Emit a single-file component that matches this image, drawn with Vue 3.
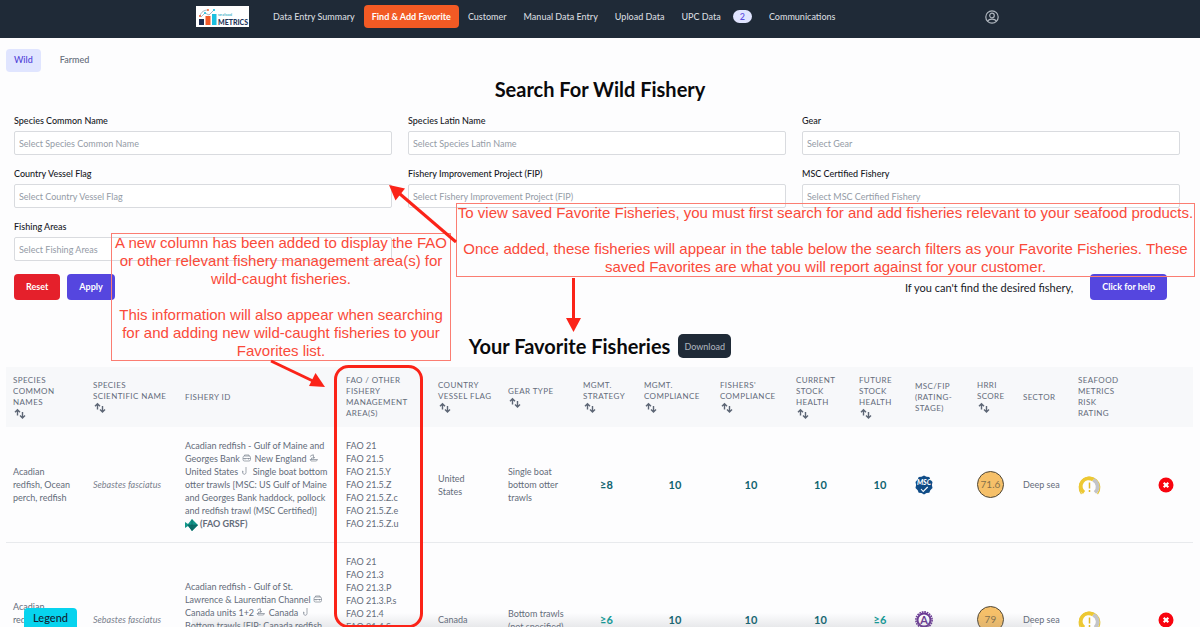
<script setup>
const nav = [
  { label: 'Data Entry Summary' },
  { label: 'Find & Add Favorite', active: true },
  { label: 'Customer' },
  { label: 'Manual Data Entry' },
  { label: 'Upload Data' },
  { label: 'UPC Data', badge: 2 },
  { label: 'Communications' },
]
const filters = [
  { id: 'common', label: 'Species Common Name' },
  { id: 'latin', label: 'Species Latin Name' },
  { id: 'gear', label: 'Gear' },
  { id: 'flag', label: 'Country Vessel Flag' },
  { id: 'fip', label: 'Fishery Improvement Project (FIP)' },
  { id: 'msc', label: 'MSC Certified Fishery' },
  { id: 'areas', label: 'Fishing Areas' },
]
const columns = [
  { lines: ['Species', 'Common', 'Names'], sort: true, w: 80 },
  { lines: ['Species', 'Scientific Name'], sort: true, w: 92 },
  { lines: ['Fishery ID'], w: 161 },
  { lines: ['FAO / Other', 'Fishery', 'Management', 'Area(s)'], w: 92 },
  { lines: ['Country', 'Vessel Flag'], sort: true, w: 70 },
  { lines: ['Gear Type'], sort: true, w: 75 },
  { lines: ['Mgmt.', 'Strategy'], sort: true, w: 61 },
  { lines: ['Mgmt.', 'Compliance'], sort: true, w: 76 },
  { lines: ["Fishers'", 'Compliance'], sort: true, w: 76 },
  { lines: ['Current', 'Stock', 'Health'], sort: true, w: 63 },
  { lines: ['Future', 'Stock', 'Health'], sort: true, w: 56 },
  { lines: ['MSC/FIP', '(Rating-', 'Stage)'], w: 62 },
  { lines: ['HRRI', 'Score'], sort: true, w: 46 },
  { lines: ['Sector'], w: 55 },
  { lines: ['Seafood', 'Metrics', 'Risk', 'Rating'], w: 80 },
  { lines: [], w: 42 },
]
const total = columns.reduce((sum, c) => sum + c.w, 0)
const rows = [
  {
    names: 'Acadian redfish, Ocean perch, redfish',
    latin: 'Sebastes fasciatus',
    stock: 'Acadian redfish - Gulf of Maine and Georges Bank',
    area: 'New England',
    flagState: 'United States',
    method: 'Single boat bottom otter trawls [MSC: US Gulf of Maine and Georges Bank haddock, pollock and redfish trawl (MSC Certified)]',
    grsf: true,
    fao: ['21', '21.5', '21.5.Y', '21.5.Z', '21.5.Z.c', '21.5.Z.e', '21.5.Z.u'],
    country: 'United States',
    gear: 'Single boat bottom otter trawls',
    scores: ['≥8', '10', '10', '10', '10'],
    cert: 'msc',
    hrri: '71.6',
  },
  {
    names: 'Acadian redfish, Ocean perch, redfish',
    latin: 'Sebastes fasciatus',
    stock: 'Acadian redfish - Gulf of St. Lawrence & Laurentian Channel',
    area: 'Canada units 1+2',
    flagState: 'Canada',
    method: 'Bottom trawls [FIP: Canada redfish trawl]',
    grsf: true,
    fao: ['21', '21.3', '21.3.P', '21.3.P.s', '21.4', '21.4.S.s', '21.4.T', '21.4.V', '21.4.V.n', '21.4.V.s'],
    country: 'Canada',
    gear: 'Bottom trawls (not specified)',
    scores: ['≥6', '10', '10', '10', '≥6'],
    cert: 'fip',
    hrri: '79',
  },
]
</script>

<template>
  <div class="page">
    <header class="topbar">
      <svg class="logo" viewBox="0 0 53 21" role="img" aria-label="Seafood Metrics">
        <rect width="53" height="21" fill="#fff" />
        <rect x="3" y="13" width="5" height="6" fill="#1d2b4f" />
        <rect x="9.5" y="10" width="5" height="9" fill="#f15a29" />
        <rect x="16" y="8" width="4.5" height="11" fill="#1cc0e0" />
        <path d="M4 10c1-4 4-6 8-6M5 11l4-4 4 2 5-5" fill="none" stroke="#8fa3b5" stroke-width=".8" />
        <circle cx="4" cy="10" r="1" fill="#f15a29" />
        <circle cx="9" cy="7" r="1" fill="#1cc0e0" />
        <circle cx="18" cy="4" r="1.1" fill="#1cc0e0" />
        <circle cx="12" cy="4" r=".9" fill="#f15a29" />
        <text x="22" y="10" class="logo-small">seafood</text>
        <text x="22" y="19" class="logo-word">METRICS</text>
      </svg>
      <nav class="nav" aria-label="Main">
        <a v-for="n in nav" :key="n.label" href="#" :class="{ active: n.active }">
          {{ n.label }}<span v-if="n.badge" class="badge">{{ n.badge }}</span>
        </a>
      </nav>
      <button class="account" aria-label="Account">
        <svg viewBox="0 0 16 16" fill="none" stroke="#aeb5bd" stroke-width="1.2">
          <circle cx="8" cy="8" r="6.2" />
          <circle cx="8" cy="6.5" r="2.3" />
          <path d="M3.500 12.300c1-1.700 2.600-2.200 4.500-2.200s3.500.5 4.500 2.200" />
        </svg>
      </button>
    </header>

    <nav class="tabs" aria-label="Fishery type">
      <a href="#" class="current">Wild</a>
      <a href="#">Farmed</a>
    </nav>

    <main>
      <h1>Search For Wild Fishery</h1>
      <form class="search" @submit.prevent>
        <div class="filters">
          <div v-for="f in filters" :key="f.id" class="field">
            <label :for="f.id">{{ f.label }}</label>
            <input :id="f.id" type="text" :placeholder="'Select ' + f.label" />
          </div>
        </div>
        <div class="actions">
          <button type="reset" class="btn red">Reset</button>
          <button type="submit" class="btn">Apply</button>
          <span class="hint">If you can't find the desired fishery,</span>
          <button type="button" class="btn">Click for help</button>
        </div>
      </form>

      <div class="favorites">
        <h2>Your Favorite Fisheries</h2>
        <button class="download">Download</button>
      </div>

      <table>
        <colgroup>
          <col v-for="(c, i) in columns" :key="i" :style="{ width: (c.w / total) * 100 + '%' }" />
        </colgroup>
        <thead>
          <tr>
            <th v-for="(c, i) in columns" :key="i" scope="col">
              <span v-for="l in c.lines" :key="l" class="line">{{ l }}</span>
              <button v-if="c.sort" class="sort" :aria-label="'Sort by ' + c.lines.join(' ')">
                <svg viewBox="0 0 14 12" fill="none" stroke="#5d6675" stroke-width="1.4">
                  <path d="M4.500 7.500V2M2 4.200 4.500 1.800 7 4.200M9.500 4V9.800M7 7.500 9.500 10 12 7.500" />
                </svg>
              </button>
            </th>
          </tr>
        </thead>
        <tbody>
          <tr v-for="(r, i) in rows" :key="i">
            <td class="snug">{{ r.names }}</td>
            <td><i>{{ r.latin }}</i></td>
            <td>
              {{ r.stock }}
              <svg class="glyph" viewBox="0 0 10 8" fill="none" stroke="#7b8491" stroke-width=".7">
                <rect x="1" y="2" width="7.5" height="5" rx="1.5" /><path d="M2.500 2V1H7v1M1 4.500h7.500M3 4v1.500M6.500 4v1.500" />
              </svg>
              {{ r.area }}
              <svg class="glyph" viewBox="0 0 10 8" fill="none" stroke="#7b8491" stroke-width=".7">
                <path d="M1 5.500h7.500L7.500 7H2zM2.500 5.500V4H5l-1-3M1 2.500l2-1.500h2M4 4l2-.5" />
              </svg>
              {{ r.flagState }}
              <svg class="glyph" viewBox="0 0 10 8" fill="none" stroke="#7b8491" stroke-width=".7">
                <path d="M6 0v5.500C6 8 2.500 8 2.500 5V4l1.200 1" />
              </svg>
              {{ r.method }}
              <template v-if="r.grsf">
                <br /><svg class="fish" viewBox="0 0 13 12">
                  <path d="M0 3l3 2 4-5 6 6-6 6-4-5-3 2z" fill="#12968a" />
                  <path d="M3 6h9.500L7 11.500zM7 .5v11" fill="#0c6f6a" stroke="#0b5f5e" stroke-width=".6" />
                </svg>
                <b>(FAO GRSF)</b>
              </template>
            </td>
            <td><span v-for="a in r.fao" :key="a" class="line">FAO {{ a }}</span></td>
            <td class="snug">{{ r.country }}</td>
            <td>{{ r.gear }}</td>
            <td v-for="(s, k) in r.scores" :key="k" class="score" :class="{ mid: s === '≥6' }">{{ s }}</td>
            <td>
              <svg v-if="r.cert === 'msc'" class="cert" viewBox="0 0 18 20" role="img" aria-label="MSC certified">
                <path d="M9 .5l2.500 1.200 2.800.3 1 2.500L17.500 7l-.6 3 .6 3-2.200 2.200-1 2.500-2.800.3L9 19.500 6.500 18l-2.800-.3-1-2.500L.5 13l.6-3-.6-3 2.200-2.500 1-2.500 2.800-.3z" fill="#104c87" />
                <text x="9" y="10" text-anchor="middle" class="msc">MSC</text>
                <path d="M6 14l2.200 2.500 4.500-4.500" fill="none" stroke="#fff" stroke-width="1.1" />
              </svg>
              <svg v-else class="cert" viewBox="0 0 18 20" role="img" aria-label="FIP rating A">
                <circle cx="9" cy="10" r="8.1" fill="none" stroke="#6b3a94" stroke-width="1.6" stroke-dasharray="1.7 .845" />
                <circle cx="9" cy="10" r="6.5" fill="#fff" stroke="#6b3a94" stroke-width="2" />
                <text x="9" y="14" text-anchor="middle" class="grade">A</text>
              </svg>
            </td>
            <td><span class="hrri">{{ r.hrri }}</span></td>
            <td>Deep sea</td>
            <td>
              <svg class="gauge" viewBox="0 0 23 20" role="img" aria-label="Medium risk">
                <path d="M3.500 19A10.300 10.300 0 1 1 19.500 19" fill="none" stroke="#e6c63c" stroke-width="1.2" />
                <path d="M15.200 4.900A7.600 7.600 0 0 1 17 17.500" fill="none" stroke="#c3c4c8" stroke-width="3.6" />
                <path d="M6 17.500A7.600 7.600 0 0 1 15.200 4.900" fill="none" stroke="#edc832" stroke-width="3.6" />
                <path d="M11.500 7.500v6M11.500 15v2" stroke="#e2b927" stroke-width="1.5" />
              </svg>
            </td>
            <td>
              <button class="remove" aria-label="Remove favorite">
                <svg viewBox="0 0 16 16">
                  <circle cx="8" cy="8" r="7.5" fill="#f8040f" />
                  <path d="M5.700 5.700l4.600 4.600M10.300 5.700l-4.600 4.600" stroke="#fff" stroke-width="2.2" />
                </svg>
              </button>
            </td>
          </tr>
        </tbody>
      </table>
    </main>

    <div class="shade"></div>
    <button class="legend">Legend</button>

    <aside class="note column-note">
      <p>A new column has been added to display the FAO or other relevant fishery management area(s) for wild-caught fisheries.</p>
      <p>This information will also appear when searching for and adding new wild-caught fisheries to your Favorites list.</p>
    </aside>
    <aside class="note saved-note">
      <p>To view saved Favorite Fisheries, you must first search for and add fisheries relevant to your seafood products.</p>
      <p>Once added, these fisheries will appear in the table below the search filters as your Favorite Fisheries. These saved Favorites are what you will report against for your customer.</p>
    </aside>
    <svg class="arrows" viewBox="0 0 1200 627" aria-hidden="true">
      <g stroke="#fb2318" stroke-width="3">
        <path d="M456 242L400 194" /><path d="M573.500 278v42" /><path d="M271 361l44 21" />
      </g>
      <g fill="#fb2318">
        <path d="M389 185l16 3.500-9.500 12z" /><path d="M566 318h15l-7.500 14z" /><path d="M325 387l-16-1 6.500-13z" />
      </g>
      <rect x="335.5" y="366.5" width="86" height="260" rx="13" fill="none" stroke="#fb2318" stroke-width="3" />
    </svg>
  </div>
</template>

<style>
body { background: #fdfdfe; }
</style>

<style scoped>
.page { position: relative; height: 100vh; overflow: hidden; font-family: Lato, "Liberation Sans", sans-serif; font-size: 9px; line-height: 13px; color: #646c7a; }
* { box-sizing: border-box; }
button { font: inherit; border: 0; padding: 0; cursor: pointer; background: none; }
a { color: inherit; text-decoration: none; }
svg { display: block; }

.topbar { display: flex; align-items: center; height: 38px; padding: 0 200px 5px 196px; background: #1f2a37; }
.logo { width: 53px; height: 21px; }
.logo-small { font: 700 4px Lato, sans-serif; fill: #4fb8cc; }
.logo-word { font: 900 7px Lato, sans-serif; fill: #24365a; }
.nav { display: flex; align-items: center; gap: 1px; margin-left: 16px; font-weight: 500; color: #d5d9df; }
.nav a { display: flex; align-items: center; height: 23px; padding: 0 8px; border-radius: 4px; white-space: nowrap; }
.nav .active { background: #f25a24; color: #fff; font-weight: 700; }
.badge { margin-left: 12px; padding: 0 7px; border-radius: 7px; background: #e0e4ff; color: #5a4be0; }
.account { margin-left: auto; }
.account svg { width: 16px; height: 16px; }

.tabs { display: flex; gap: 11px; padding: 11px 6px 0; font-weight: 500; }
.tabs a { height: 23px; padding: 4px 8px; border-radius: 4px; }
.tabs .current { background: #e0e5ff; color: #4f3fd8; }

h1, h2 { margin: 0; font-size: 20px; line-height: 24px; font-weight: 700; color: #0a0a0c; text-align: center; }
h1 { margin-top: 5px; }
.search { padding: 13px 20px 0 14px; }
.filters { display: grid; grid-template-columns: repeat(3, 1fr); gap: 12px 16px; }
.field label { display: block; margin-bottom: 4px; font-weight: 500; color: #17191e; }
.field input { display: block; width: 100%; height: 24px; padding: 0 4px; border: 1px solid #d9dbdf; border-radius: 2px; background: #fff; font: inherit; outline: 0; }
.field input::placeholder { color: #949ba6; opacity: 1; }
.actions { display: flex; align-items: center; gap: 7px; padding: 13px 13px 0 0; }
.btn { height: 26px; padding: 0 12px 1px; border-radius: 4px; background: #5546df; color: #fff; font-weight: 700; }
.red { background: #e5202b; }
.hint { margin-left: auto; margin-right: 10px; font-size: 11px; color: #17191e; }

.favorites { display: flex; justify-content: center; align-items: center; gap: 8px; margin-top: 34px; }
.download { height: 24px; padding: 0 6px; border-radius: 5px; background: #1f2a37; color: #a9b0ba; font-weight: 500; }

table { width: calc(100% - 13px); margin: 9px 7px 0 6px; border-collapse: collapse; table-layout: fixed; }
thead { background: #f7f8fa; }
th { height: 60px; padding: 0 0 0 7px; font-size: 8px; line-height: 11px; font-weight: 400; letter-spacing: 0.05em; text-transform: uppercase; text-align: left; vertical-align: middle; white-space: nowrap; }
.line { display: block; }
.sort { display: block; }
.sort svg { width: 14px; height: 12px; }
td { padding: 12px 7px 11px; border-bottom: 1px solid #e8eaed; vertical-align: middle; }
td.snug { padding-right: 13px; }
td i { white-space: nowrap; color: #7b828e; }
.glyph { display: inline-block; width: 10px; height: 8px; }
.fish { display: inline-block; width: 13px; height: 12px; margin-right: 2px; vertical-align: middle; }
td.score { padding: 12px 0 11px; text-align: center; font-size: 11px; font-weight: 700; color: #0f6470; }
td.mid { color: #0c9a97; }
.cert { width: 18px; height: 20px; }
.msc { font: italic 900 7px Lato, sans-serif; fill: #fff; }
.grade { font: 700 11px Lato, sans-serif; fill: #6b3a94; }
.hrri { display: flex; align-items: center; justify-content: center; width: 27px; height: 27px; border: 1px solid #4d4638; border-radius: 50%; background: #f6c069; font-size: 10px; color: #857049; }
.gauge { width: 23px; height: 20px; }
.remove { display: block; }
.remove svg { width: 16px; height: 16px; }

.shade { position: absolute; left: 16%; right: 14%; bottom: 0; height: 14px; background: linear-gradient(to bottom, rgba(120, 125, 135, 0), rgba(120, 125, 135, 0.16)); }
.legend { position: absolute; left: 24px; bottom: 0; width: 53px; height: 19px; border-radius: 4px 4px 0 0; background: #07d3ee; color: #123; font-size: 11px; font-weight: 500; }

.note { position: absolute; border: 1px solid #fb7d72; font-family: "Liberation Sans", Arial, sans-serif; font-size: 15px; line-height: 18px; text-align: center; color: #fa4a3a; }
.note p { margin: 0; }
.note p + p { margin-top: 18px; }
.column-note { left: 111px; top: 233px; width: 340px; }
.saved-note { left: 456px; top: 203px; width: 739px; }
.arrows { position: absolute; left: 0; top: 0; width: 1200px; height: 627px; pointer-events: none; }
</style>
